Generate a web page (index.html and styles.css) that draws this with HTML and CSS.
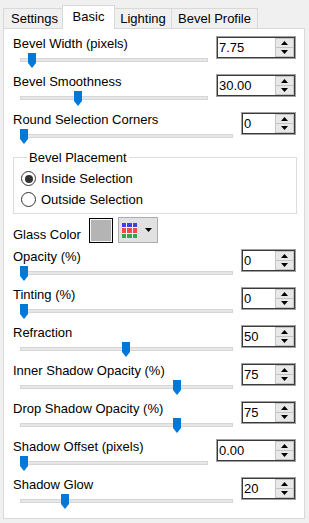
FILE: index.html
```html
<!DOCTYPE html>
<html>
<head>
<meta charset="utf-8">
<link rel="stylesheet" href="styles.css">
</head>
<body>
<div class="tabs">
  <div class="tab t-settings">Settings</div>
  <div class="tab sel t-basic">Basic</div>
  <div class="tab t-lighting">Lighting</div>
  <div class="tab t-profile">Bevel Profile</div>
</div>
<div class="panel">
  <div class="row">
    <div class="ctl">
      <div class="lbl">Bevel Width (pixels)</div>
      <div class="slider"><div class="track"></div><svg class="thumb" style="left:8px" width="8" height="15" viewBox="0 0 8 15"><path d="M0 0H8V10L4 15L0 10Z"/></svg></div>
    </div>
    <div class="spin wide"><div class="spin-in"><span class="val">7.75</span><div class="btns"><div class="btn up"><svg width="7" height="4" viewBox="0 0 7 4"><path d="M0 4L3.5 0L7 4Z"/></svg></div><div class="btn dn"><svg width="7" height="4" viewBox="0 0 7 4"><path d="M0 0L3.5 4L7 0Z"/></svg></div></div></div></div>
  </div>
  <div class="row">
    <div class="ctl">
      <div class="lbl">Bevel Smoothness</div>
      <div class="slider"><div class="track"></div><svg class="thumb" style="left:54px" width="8" height="15" viewBox="0 0 8 15"><path d="M0 0H8V10L4 15L0 10Z"/></svg></div>
    </div>
    <div class="spin wide"><div class="spin-in"><span class="val">30.00</span><div class="btns"><div class="btn up"><svg width="7" height="4" viewBox="0 0 7 4"><path d="M0 4L3.5 0L7 4Z"/></svg></div><div class="btn dn"><svg width="7" height="4" viewBox="0 0 7 4"><path d="M0 0L3.5 4L7 0Z"/></svg></div></div></div></div>
  </div>
  <div class="row">
    <div class="ctl">
      <div class="lbl">Round Selection Corners</div>
      <div class="slider"><div class="track"></div><svg class="thumb" style="left:0px" width="8" height="15" viewBox="0 0 8 15"><path d="M0 0H8V10L4 15L0 10Z"/></svg></div>
    </div>
    <div class="spin"><div class="spin-in"><span class="val">0</span><div class="btns"><div class="btn up"><svg width="7" height="4" viewBox="0 0 7 4"><path d="M0 4L3.5 0L7 4Z"/></svg></div><div class="btn dn"><svg width="7" height="4" viewBox="0 0 7 4"><path d="M0 0L3.5 4L7 0Z"/></svg></div></div></div></div>
  </div>

  <fieldset class="group">
    <legend>Bevel Placement</legend>
    <div class="radio"><span class="circ on"></span><span>Inside Selection</span></div>
    <div class="radio"><span class="circ"></span><span>Outside Selection</span></div>
  </fieldset>

  <div class="glass">
    <span class="glbl">Glass Color</span>
    <span class="swatch"></span>
    <span class="cbtn">
      <svg class="grid" width="15" height="15" viewBox="0 0 15 15">
        <rect x="0" y="0" width="15" height="15" fill="#f4f4f4"/>
        <rect x="0" y="0" width="4" height="4" fill="#3f3fee"/><rect x="5" y="0" width="5" height="4" fill="#3f3fee"/><rect x="11" y="0" width="4" height="4" fill="#3f3fee"/>
        <rect x="0" y="5" width="4" height="5" fill="#ee4a4a"/><rect x="5" y="5" width="5" height="5" fill="#ee4a4a"/><rect x="11" y="5" width="4" height="5" fill="#ee4a4a"/>
        <rect x="0" y="11" width="4" height="4" fill="#35a545"/><rect x="5" y="11" width="5" height="4" fill="#35a545"/><rect x="11" y="11" width="4" height="4" fill="#35a545"/>
      </svg>
      <svg class="drop" width="7" height="4" viewBox="0 0 7 4"><path d="M0 0L3.5 4L7 0Z"/></svg>
    </span>
  </div>

  <div class="row">
    <div class="ctl">
      <div class="lbl">Opacity (%)</div>
      <div class="slider"><div class="track"></div><svg class="thumb" style="left:0px" width="8" height="15" viewBox="0 0 8 15"><path d="M0 0H8V10L4 15L0 10Z"/></svg></div>
    </div>
    <div class="spin"><div class="spin-in"><span class="val">0</span><div class="btns"><div class="btn up"><svg width="7" height="4" viewBox="0 0 7 4"><path d="M0 4L3.5 0L7 4Z"/></svg></div><div class="btn dn"><svg width="7" height="4" viewBox="0 0 7 4"><path d="M0 0L3.5 4L7 0Z"/></svg></div></div></div></div>
  </div>
  <div class="row">
    <div class="ctl">
      <div class="lbl">Tinting (%)</div>
      <div class="slider"><div class="track"></div><svg class="thumb" style="left:0px" width="8" height="15" viewBox="0 0 8 15"><path d="M0 0H8V10L4 15L0 10Z"/></svg></div>
    </div>
    <div class="spin"><div class="spin-in"><span class="val">0</span><div class="btns"><div class="btn up"><svg width="7" height="4" viewBox="0 0 7 4"><path d="M0 4L3.5 0L7 4Z"/></svg></div><div class="btn dn"><svg width="7" height="4" viewBox="0 0 7 4"><path d="M0 0L3.5 4L7 0Z"/></svg></div></div></div></div>
  </div>
  <div class="row">
    <div class="ctl">
      <div class="lbl">Refraction</div>
      <div class="slider"><div class="track"></div><svg class="thumb" style="left:102px" width="8" height="15" viewBox="0 0 8 15"><path d="M0 0H8V10L4 15L0 10Z"/></svg></div>
    </div>
    <div class="spin"><div class="spin-in"><span class="val">50</span><div class="btns"><div class="btn up"><svg width="7" height="4" viewBox="0 0 7 4"><path d="M0 4L3.5 0L7 4Z"/></svg></div><div class="btn dn"><svg width="7" height="4" viewBox="0 0 7 4"><path d="M0 0L3.5 4L7 0Z"/></svg></div></div></div></div>
  </div>
  <div class="row">
    <div class="ctl">
      <div class="lbl">Inner Shadow Opacity (%)</div>
      <div class="slider"><div class="track"></div><svg class="thumb" style="left:153px" width="8" height="15" viewBox="0 0 8 15"><path d="M0 0H8V10L4 15L0 10Z"/></svg></div>
    </div>
    <div class="spin"><div class="spin-in"><span class="val">75</span><div class="btns"><div class="btn up"><svg width="7" height="4" viewBox="0 0 7 4"><path d="M0 4L3.5 0L7 4Z"/></svg></div><div class="btn dn"><svg width="7" height="4" viewBox="0 0 7 4"><path d="M0 0L3.5 4L7 0Z"/></svg></div></div></div></div>
  </div>
  <div class="row">
    <div class="ctl">
      <div class="lbl">Drop Shadow Opacity (%)</div>
      <div class="slider"><div class="track"></div><svg class="thumb" style="left:153px" width="8" height="15" viewBox="0 0 8 15"><path d="M0 0H8V10L4 15L0 10Z"/></svg></div>
    </div>
    <div class="spin"><div class="spin-in"><span class="val">75</span><div class="btns"><div class="btn up"><svg width="7" height="4" viewBox="0 0 7 4"><path d="M0 4L3.5 0L7 4Z"/></svg></div><div class="btn dn"><svg width="7" height="4" viewBox="0 0 7 4"><path d="M0 0L3.5 4L7 0Z"/></svg></div></div></div></div>
  </div>
  <div class="row">
    <div class="ctl">
      <div class="lbl">Shadow Offset (pixels)</div>
      <div class="slider"><div class="track"></div><svg class="thumb" style="left:0px" width="8" height="15" viewBox="0 0 8 15"><path d="M0 0H8V10L4 15L0 10Z"/></svg></div>
    </div>
    <div class="spin wide"><div class="spin-in"><span class="val">0.00</span><div class="btns"><div class="btn up"><svg width="7" height="4" viewBox="0 0 7 4"><path d="M0 4L3.5 0L7 4Z"/></svg></div><div class="btn dn"><svg width="7" height="4" viewBox="0 0 7 4"><path d="M0 0L3.5 4L7 0Z"/></svg></div></div></div></div>
  </div>
  <div class="row">
    <div class="ctl">
      <div class="lbl">Shadow Glow</div>
      <div class="slider"><div class="track"></div><svg class="thumb" style="left:41px" width="8" height="15" viewBox="0 0 8 15"><path d="M0 0H8V10L4 15L0 10Z"/></svg></div>
    </div>
    <div class="spin"><div class="spin-in"><span class="val">20</span><div class="btns"><div class="btn up"><svg width="7" height="4" viewBox="0 0 7 4"><path d="M0 4L3.5 0L7 4Z"/></svg></div><div class="btn dn"><svg width="7" height="4" viewBox="0 0 7 4"><path d="M0 0L3.5 4L7 0Z"/></svg></div></div></div></div>
  </div>
</div>
</body>
</html>
```

FILE: styles.css
```css
* { box-sizing: border-box; }
html, body {
  margin: 0;
  padding: 0;
  background: #f0f0f0;
  width: 309px;
  height: 523px;
  overflow: hidden;
  font-family: "Liberation Sans", Arial, sans-serif;
  font-size: 13px;
  line-height: 15px;
  color: #000;
}
.tabs {
  display: flex;
  align-items: flex-end;
  height: 28px;
  padding-left: 3px;
  position: relative;
  z-index: 2;
}
.tab {
  height: 20px;
  border: 1px solid #d9d9d9;
  border-bottom: none;
  background: #f0f0f0;
  padding-top: 2px;
  text-align: center;
  margin-left: -1px;
}
.t-settings { width: 60px; margin-left: 0; padding-left: 3px; }
.t-basic { width: 53px; }
.t-lighting { width: 58px; }
.t-profile { width: 87px; }
.tab.sel {
  height: 24px;
  margin-bottom: -1px;
  background: #fff;
  padding-top: 3px;
  position: relative;
  z-index: 3;
}
.panel {
  margin-left: 3px;
  width: 302px;
  height: 491px;
  border: 1px solid #d9d9d9;
  background: #fff;
  padding: 7px 0 0 0;
  position: relative;
  z-index: 1;
}
.row {
  display: flex;
  align-items: flex-start;
  height: 38px;
}
.ctl {
  flex: 1;
  min-width: 0;
}
.lbl {
  padding-left: 9px;
  height: 15px;
  white-space: nowrap;
}
.slider {
  position: relative;
  height: 19px;
  margin: 0 8px 0 16px;
}
.track {
  position: relative;
  top: 7px;
  height: 4px;
  background: #e7e7e7;
  border: 1px solid #d6d6d6;
}
.thumb {
  position: absolute;
  top: 2px;
  display: block;
  fill: #0078d7;
}
.spin {
  width: 55px;
  height: 23px;
  margin-right: 8px;
  border: 1px solid #a0a0a0;
  background: #fff;
}
.spin.wide { width: 80px; }
.spin-in {
  display: flex;
  height: 100%;
  border: 1px solid #3a3a3a;
}
.val {
  flex: 1;
  padding-left: 1px;
  line-height: 19px;
  font-size: 13px;
}
.btns {
  width: 19px;
  margin-left: 1px;
  display: flex;
  flex-direction: column;
  border: 1px solid #c4c4c4;
}
.btn {
  flex: 1;
  display: flex;
  align-items: center;
  justify-content: center;
  background: #e8e8e8;
}
.btn svg { display: block; fill: #000; }
.btn.up { border-bottom: 1px solid #c4c4c4; }
.group {
  margin: 0 7px 0 9px;
  padding: 3px 0 3px 7px;
  border: 1px solid #dcdcdc;
  min-width: 0;
}
.group legend {
  padding: 0 2px;
  margin-left: 6px;
  line-height: 15px;
}
.radio {
  display: flex;
  align-items: center;
  height: 21px;
  gap: 5px;
}
.circ {
  width: 15px;
  height: 15px;
  border: 1px solid #333;
  border-radius: 50%;
  display: flex;
  align-items: center;
  justify-content: center;
  background: #fff;
}
.circ.on { border-width: 1.5px; }
.circ.on::after {
  content: "";
  width: 8px;
  height: 8px;
  border-radius: 50%;
  background: #333;
}
.glass {
  display: flex;
  align-items: flex-start;
  margin: 4px 0 6px 0;
  height: 25px;
  padding-left: 9px;
}
.glbl {
  width: 76px;
  margin-top: 9px;
}
.swatch {
  width: 24px;
  height: 25px;
  border: 1px solid #000;
  background: #b4b4b4;
  box-shadow: inset 0 0 0 1px #f4f4f4;
}
.cbtn {
  margin-left: 5px;
  width: 40px;
  height: 26px;
  margin-top: -1px;
  border: 1px solid #adadad;
  background: #e1e1e1;
  display: flex;
  align-items: center;
  padding-left: 3px;
}
.grid { display: block; }
.drop { display: block; margin-left: 8px; fill: #000; }
```
